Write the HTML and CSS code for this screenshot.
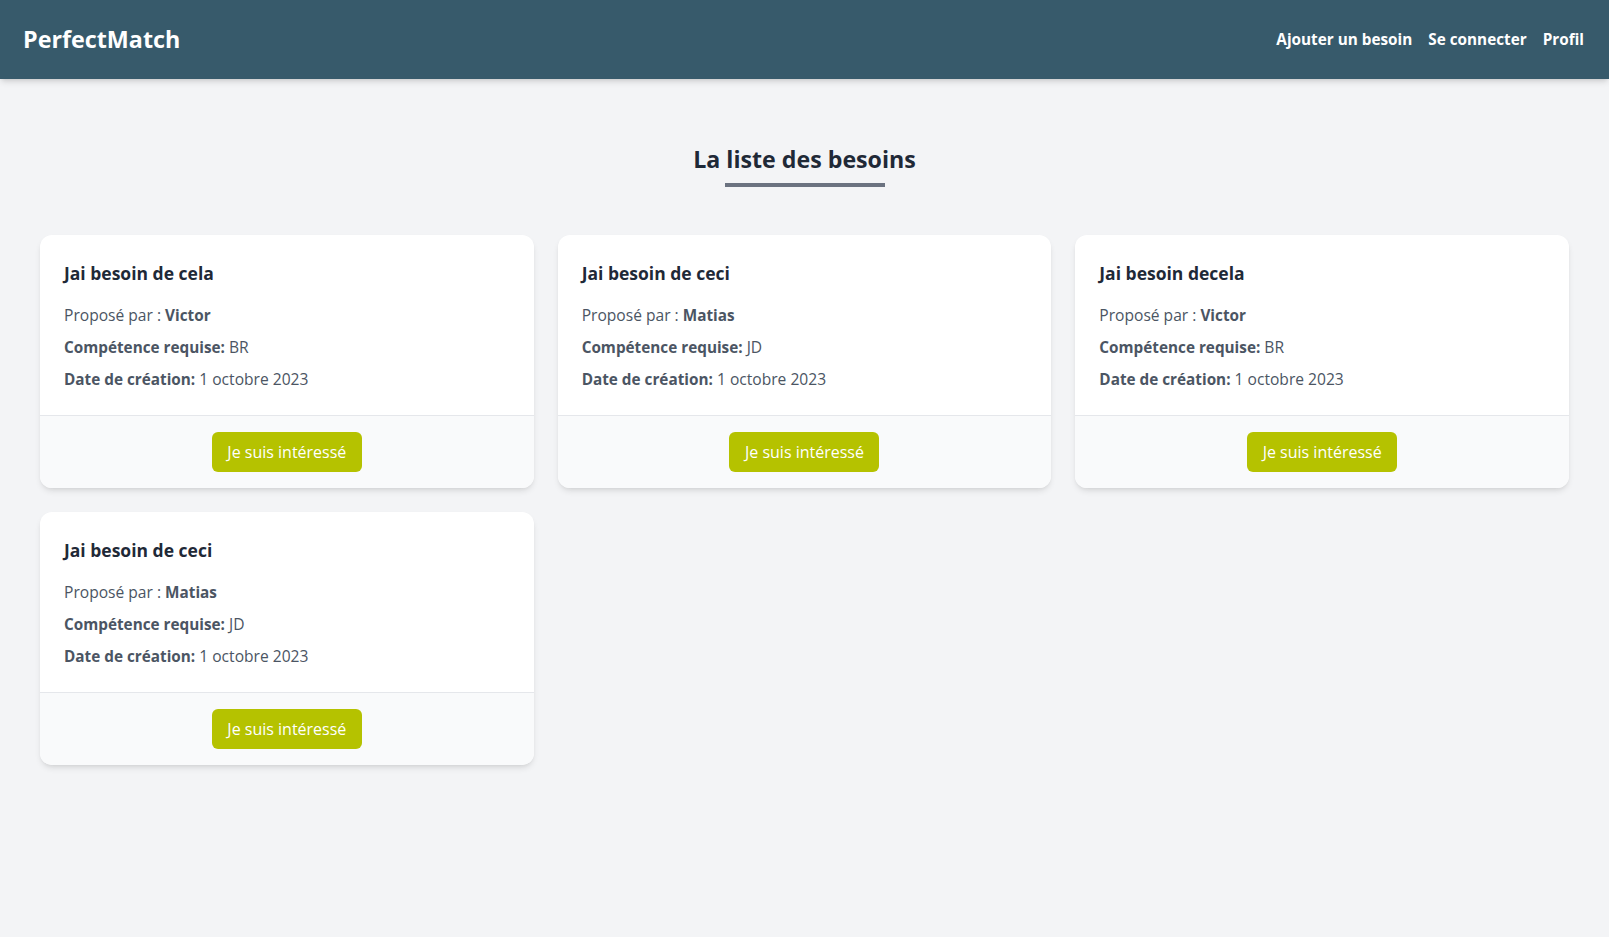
FILE: index.html
```html
<!DOCTYPE html>
<html lang="fr">
<head>
<meta charset="utf-8">
<title>PerfectMatch</title>
<link rel="stylesheet" href="styles.css">
</head>
<body>
<header class="topbar">
  <a class="brand" href="#">PerfectMatch</a>
  <nav class="nav">
    <a href="#">Ajouter un besoin</a>
    <a href="#">Se connecter</a>
    <a href="#">Profil</a>
  </nav>
</header>
<main class="main">
  <h2 class="page-title">La liste des besoins</h2>
  <div class="grid">
    <div class="card">
      <div class="card-body">
        <h3 class="card-title">Jai besoin de cela</h3>
        <p class="line">Proposé par : <b>Victor</b></p>
        <p class="line"><b>Compétence requise:</b> BR</p>
        <p class="line"><b>Date de création:</b> 1 octobre 2023</p>
      </div>
      <div class="card-foot"><button class="btn">Je suis intéressé</button></div>
    </div>
    <div class="card">
      <div class="card-body">
        <h3 class="card-title">Jai besoin de ceci</h3>
        <p class="line">Proposé par : <b>Matias</b></p>
        <p class="line"><b>Compétence requise:</b> JD</p>
        <p class="line"><b>Date de création:</b> 1 octobre 2023</p>
      </div>
      <div class="card-foot"><button class="btn">Je suis intéressé</button></div>
    </div>
    <div class="card">
      <div class="card-body">
        <h3 class="card-title">Jai besoin decela</h3>
        <p class="line">Proposé par : <b>Victor</b></p>
        <p class="line"><b>Compétence requise:</b> BR</p>
        <p class="line"><b>Date de création:</b> 1 octobre 2023</p>
      </div>
      <div class="card-foot"><button class="btn">Je suis intéressé</button></div>
    </div>
    <div class="card">
      <div class="card-body">
        <h3 class="card-title">Jai besoin de ceci</h3>
        <p class="line">Proposé par : <b>Matias</b></p>
        <p class="line"><b>Compétence requise:</b> JD</p>
        <p class="line"><b>Date de création:</b> 1 octobre 2023</p>
      </div>
      <div class="card-foot"><button class="btn">Je suis intéressé</button></div>
    </div>
  </div>
</main>
</body>
</html>
```
FILE: styles.css
```css
* { box-sizing: border-box; }
html, body { margin: 0; padding: 0; }
body {
  font-family: "Open Sans", "Noto Sans", sans-serif;
  background: #f3f4f6;
  color: #4b5563;
  min-height: 937px;
}
.topbar {
  height: 79px;
  background: #375a6b;
  display: flex;
  align-items: center;
  justify-content: space-between;
  padding: 0 25px 2px 23px;
  box-shadow: 0 4px 6px -1px rgba(0,0,0,0.12), 0 2px 4px -2px rgba(0,0,0,0.1);
}
.brand {
  color: #fff;
  font-weight: 700;
  font-size: 23.3px;
  text-decoration: none;
}
.nav { display: flex; gap: 16px; }
.nav a {
  color: #fff;
  font-weight: 700;
  font-size: 15.3px;
  text-decoration: none;
}
.main { padding: 64px 40px 40px; }
.page-title {
  margin: 0 auto;
  text-align: center;
  font-size: 23.2px;
  line-height: 32px;
  font-weight: 700;
  color: #1f2937;
}
.page-title::after {
  content: "";
  display: block;
  width: 160px;
  height: 4px;
  background: #6b7280;
  margin: 8px auto 0;
}
.grid {
  margin-top: 48px;
  display: grid;
  grid-template-columns: repeat(3, 1fr);
  gap: 24px;
}
.card {
  background: #fff;
  border-radius: 12px;
  box-shadow: 0 4px 6px -1px rgba(0,0,0,0.1), 0 2px 4px -2px rgba(0,0,0,0.08);
  overflow: hidden;
}
.card-body { padding: 24px 24px 24px; }
.card-title {
  margin: 0 0 16px;
  font-size: 17.5px;
  line-height: 28px;
  font-weight: 700;
  color: #1f2937;
}
.line {
  margin: 0 0 8px;
  font-size: 15.6px;
  line-height: 24px;
}
.line:last-child { margin-bottom: 0; }
.line b { font-weight: 700; font-size: 15.3px; color: #4b5563; }
.card-foot {
  background: #f9fafb;
  border-top: 1px solid #e5e7eb;
  padding: 16px;
  display: flex;
  justify-content: center;
}
.btn {
  font-family: inherit;
  height: 40px;
  width: 150px;
  border: 0;
  border-radius: 6px;
  background: #b5c200;
  color: #fff;
  font-size: 16px;
}
```
